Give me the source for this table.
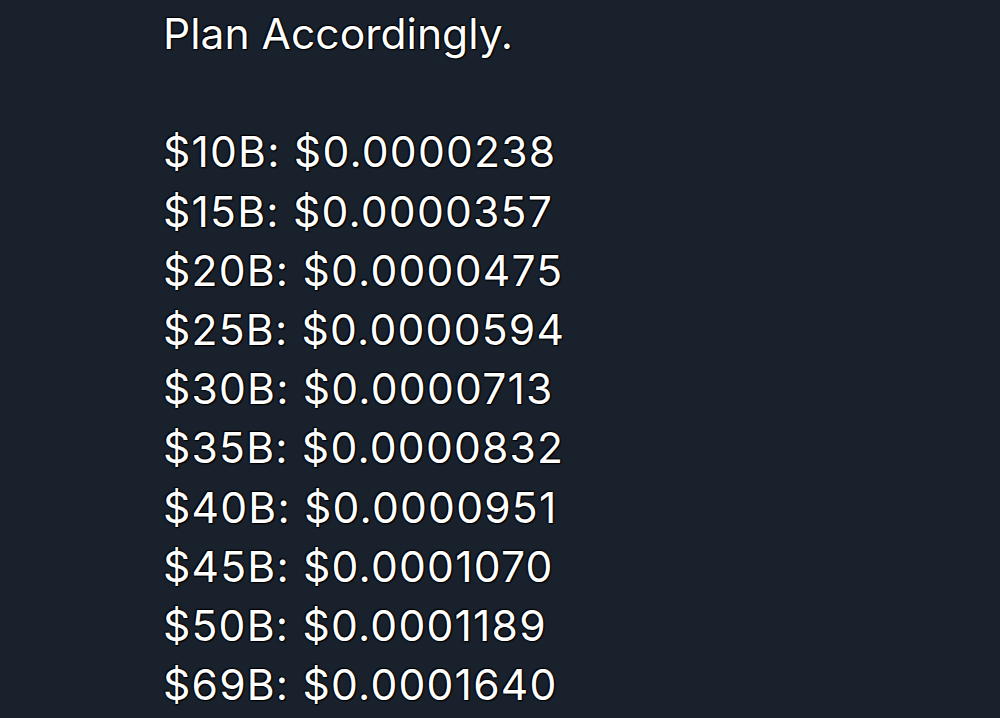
import React from "react";

const prices: [string, string][] = [
  ["$10B", "$0.0000238"],
  ["$15B", "$0.0000357"],
  ["$20B", "$0.0000475"],
  ["$25B", "$0.0000594"],
  ["$30B", "$0.0000713"],
  ["$35B", "$0.0000832"],
  ["$40B", "$0.0000951"],
  ["$45B", "$0.0001070"],
  ["$50B", "$0.0001189"],
  ["$69B", "$0.0001640"],
];

export default function App() {
  return (
    <div className="w-[1000px] h-[718px] overflow-hidden bg-[#18212c]">
      <div
        className="pl-[163px] pt-[4px] text-[42.6px] leading-[59.2px] text-white font-['Inter',sans-serif] [text-shadow:0_0_2px_#000,0_0_2px_#000,0_0_1px_#000,1px_1px_1px_#000,-1px_-1px_1px_#000]"
      >
        <p>Plan Accordingly.</p>
        <p>&nbsp;</p>
        {prices.map(([cap, price]) => (
          <p key={cap} className="tracking-[1.2px]">
            {cap}: {price}
          </p>
        ))}
      </div>
    </div>
  );
}
